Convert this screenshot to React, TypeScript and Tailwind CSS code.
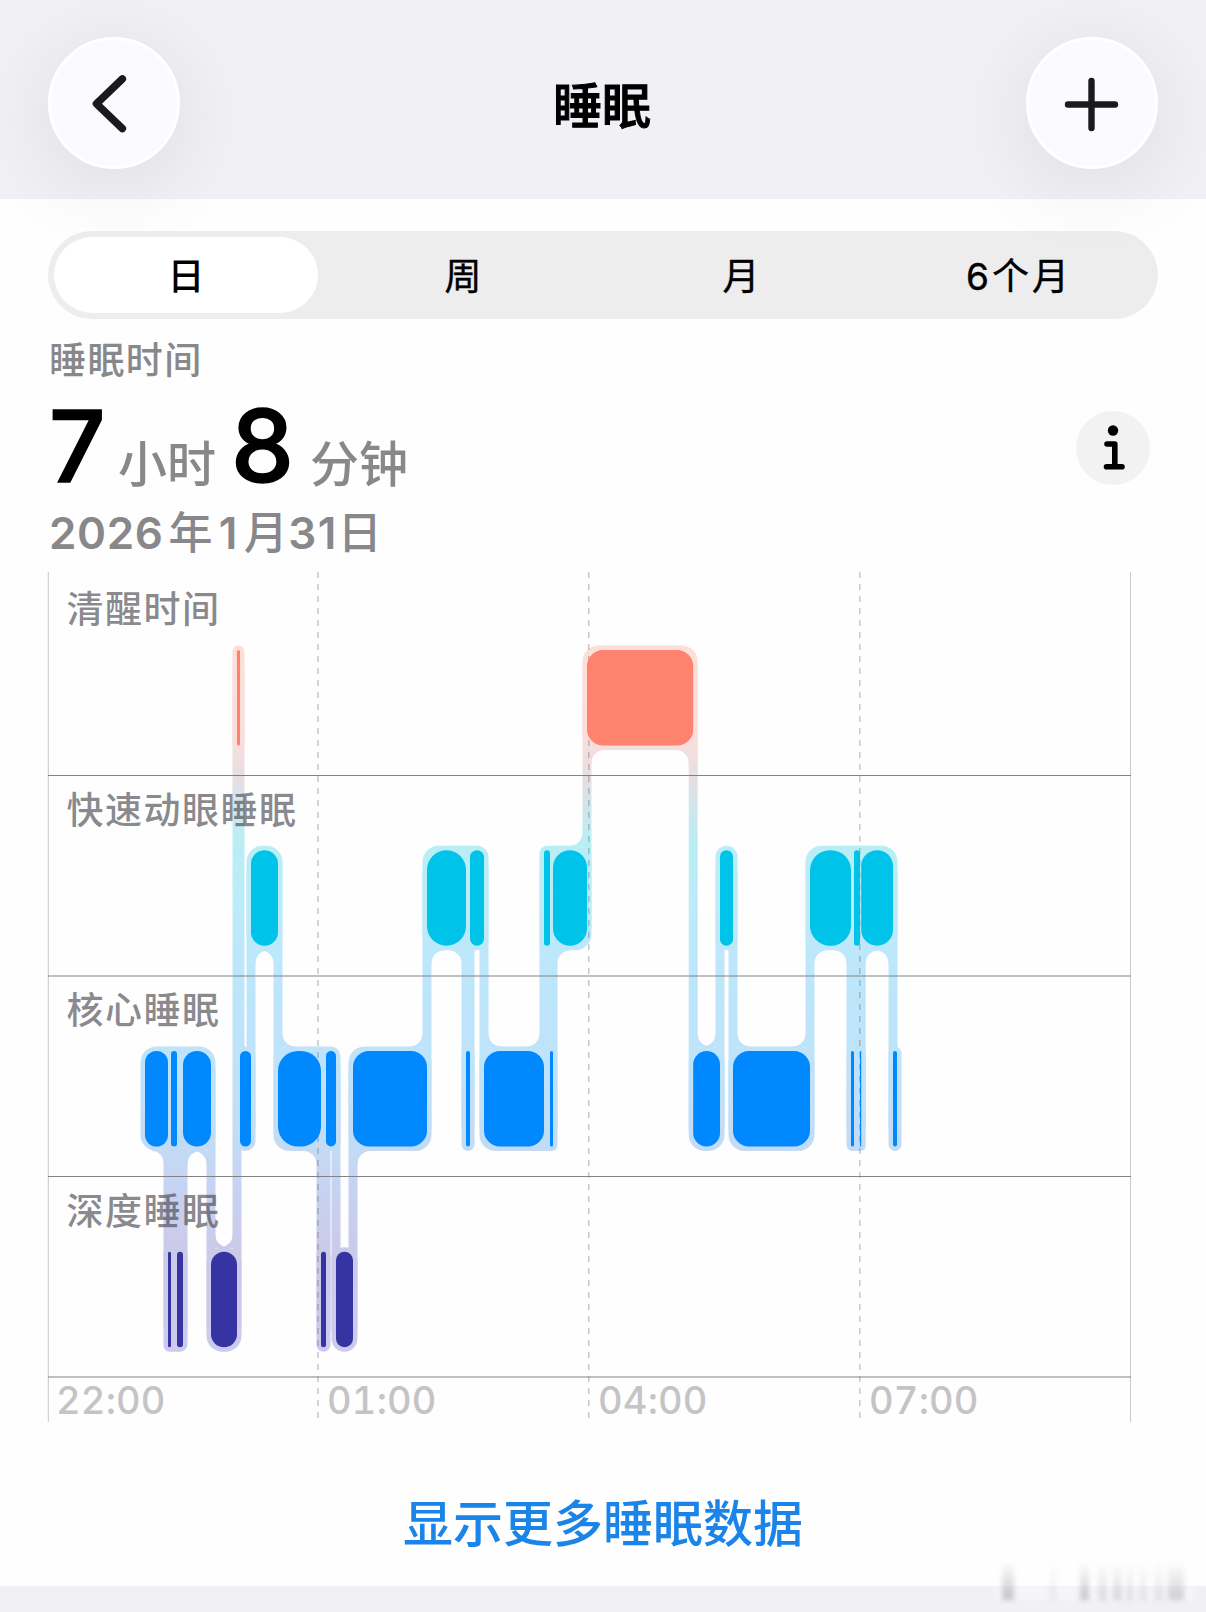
type Stage = 'awake' | 'rem' | 'core' | 'deep'

interface Segment {
    stage: Stage
    start: number
    end: number
}

const CJK = "font-['Inter','Noto_Sans_CJK_SC',sans-serif]"

const TABS = ['日', '周', '月', '6个月']
const STAGE_LABELS = ['清醒时间', '快速动眼睡眠', '核心睡眠', '深度睡眠']
const HOURS = ['22:00', '01:00', '04:00', '07:00']

// Chart geometry
const BAR_HEIGHT = 95.5
const HALO = 4.5
const STAGE_Y: Record<Stage, number> = { awake: 78, rem: 278.2, core: 479, deep: 679.7 }
const STAGE_COLOR: Record<Stage, string> = {
    awake: '#ff826e',
    rem: '#00c3ea',
    core: '#0088ff',
    deep: '#3634a3',
}
const ROW_LINES = [203.5, 404, 604.5, 805]
const HOUR_LINES = [270, 540.8, 811.8]

const TRANSITIONS: [Stage, number][] = [
    ['core', 97],
    ['deep', 120],
    ['core', 123],
    ['deep', 129],
    ['core', 135],
    ['deep', 163],
    ['awake', 189],
    ['core', 192],
    ['rem', 203],
    ['core', 230],
    ['deep', 273],
    ['core', 278],
    ['deep', 288],
    ['core', 305],
    ['rem', 379],
    ['core', 418],
    ['rem', 422],
    ['core', 436],
    ['rem', 496],
    ['core', 502],
    ['rem', 505],
    ['awake', 539],
    ['core', 645.2],
    ['rem', 672],
    ['core', 685],
    ['rem', 762],
    ['core', 803],
    ['rem', 806],
    ['core', 812],
    ['rem', 813.2],
    ['core', 845],
]
const SLEEP_END = 849

const segments: Segment[] = TRANSITIONS.map(([stage, start], i) => ({
    stage,
    start,
    end: i < TRANSITIONS.length - 1 ? TRANSITIONS[i + 1][1] : SLEEP_END,
}))

// Concave corner between a connector and the edge of a halo.
// side: 1 opens to the right, -1 to the left. dir: 1 goes down, -1 goes up.
const fillet = (x: number, y: number, r: number, side: number, dir: number) => {
    const sweep = side * dir > 0 ? 0 : 1
    return `M${x - side} ${y - dir} H${x + side * r} V${y} A${r} ${r} 0 0 ${sweep} ${x} ${y + dir * r} H${x - side} Z`
}

const getFillets = (seg: Segment, prev?: Segment, next?: Segment) => {
    const width = seg.end - seg.start
    const y = STAGE_Y[seg.stage]
    const prevDir = prev ? Math.sign(STAGE_Y[prev.stage] - y) : 0
    const nextDir = next ? Math.sign(STAGE_Y[next.stage] - y) : 0
    const gap = width - HALO * 2
    const radius = prevDir === nextDir ? (gap < 9 ? 0 : Math.min(13, gap * 0.72)) : width < 20 ? 0 : Math.min(13, width / 2)
    const edge = (dir: number) => (dir > 0 ? y + BAR_HEIGHT + HALO : y - HALO)
    const paths: string[] = []
    if (radius === 0) return paths
    if (prevDir) paths.push(fillet(seg.start + HALO, edge(prevDir), radius, 1, prevDir))
    if (nextDir) paths.push(fillet(seg.end - HALO, edge(nextDir), radius, -1, nextDir))
    return paths
}

// Two bars of one stage with only a short interruption share a single halo
const getBridge = (seg: Segment, after?: Segment) => {
    if (!after || after.stage !== seg.stage || after.start - seg.end > 8) return null
    const x1 = seg.end - Math.min(11, (seg.end - seg.start) / 2)
    const x2 = after.start + Math.min(11, (after.end - after.start) / 2)
    return <rect x={x1} y={STAGE_Y[seg.stage] - HALO} width={x2 - x1} height={BAR_HEIGHT + HALO * 2} />
}

const SleepChart = () => {
    return (
        <svg className="absolute inset-0 overflow-visible" width="1084" height="850" viewBox="0 0 1084 850" fill="none">
            <defs>
                <linearGradient id="halo" gradientUnits="userSpaceOnUse" x1="0" y1="73" x2="0" y2="780">
                    <stop offset="0" stopColor="#fddfd9" />
                    <stop offset="0.13" stopColor="#fbdedb" />
                    <stop offset="0.19" stopColor="#e4dfe3" />
                    <stop offset="0.28" stopColor="#b9eef5" />
                    <stop offset="0.36" stopColor="#bcecf9" />
                    <stop offset="0.44" stopColor="#bde7fa" />
                    <stop offset="0.58" stopColor="#bee3fb" />
                    <stop offset="0.71" stopColor="#c3dbf5" />
                    <stop offset="0.77" stopColor="#c6d2f2" />
                    <stop offset="0.85" stopColor="#cccae9" />
                    <stop offset="1" stopColor="#cecaee" />
                </linearGradient>
            </defs>

            {/* Halos and connectors */}
            <g fill="url(#halo)">
                {segments.map((seg, i) => {
                    const next = segments[i + 1]
                    const width = seg.end - seg.start
                    const y = STAGE_Y[seg.stage]
                    const top = next ? Math.min(y, STAGE_Y[next.stage]) : y
                    const bottom = next ? Math.max(y, STAGE_Y[next.stage]) : y
                    return (
                        <g key={seg.start}>
                            <rect
                                x={seg.start - HALO}
                                y={y - HALO}
                                width={width + HALO * 2}
                                height={BAR_HEIGHT + HALO * 2}
                                rx={Math.min(16, width / 2 + HALO)}
                            />
                            {next && (
                                <rect x={seg.end - HALO} y={top + 18} width={HALO * 2} height={bottom - top + 60} />
                            )}
                            {getBridge(seg, segments[i + 2])}
                            {getFillets(seg, segments[i - 1], next).map((d) => (
                                <path key={d} d={d} />
                            ))}
                        </g>
                    )
                })}
            </g>

            {/* Grid */}
            <path d="M0.3 0 V850 M1082.5 0 V850" stroke="#c9c9cb" />
            {HOUR_LINES.map((x) => (
                <path key={x} d={`M${x} 0 V850`} stroke="#3c3c43" strokeOpacity="0.3" strokeWidth="1.4" strokeDasharray="6 6" />
            ))}
            {ROW_LINES.map((y) => (
                <path key={y} d={`M0 ${y} H1083`} stroke="#828284" />
            ))}

            {/* Bars */}
            {segments.map((seg) => {
                const width = seg.end - seg.start
                return (
                    <rect
                        key={seg.start}
                        x={seg.start}
                        y={STAGE_Y[seg.stage]}
                        width={width}
                        height={BAR_HEIGHT}
                        rx={width > 50 ? 16 : Math.min(width / 2, 20)}
                        fill={STAGE_COLOR[seg.stage]}
                    />
                )
            })}
        </svg>
    )
}

const Header = () => {
    const circle =
        'flex size-[132px] items-center justify-center rounded-full border-[3px] border-white bg-[#fbfaff] shadow-[0_14px_90px_rgba(0,0,20,0.09)]'
    return (
        <header className="relative flex h-[199px] items-start justify-between px-12 pt-[37px]">
            <button className={circle}>
                <svg width="60" height="60" viewBox="0 0 60 60" fill="none" stroke="#1a1a1e" strokeWidth="7.6" strokeLinecap="round" strokeLinejoin="round">
                    <path d="M38.3 6 L12.5 30.7 L38.3 55.5" />
                </svg>
            </button>
            <h1 className="mt-[35px] -ml-[2px] text-[49px] leading-[70px] font-medium text-black [-webkit-text-stroke:1px_black]">睡眠</h1>
            <button className={circle}>
                <svg width="60" height="60" viewBox="0 0 60 60" fill="none" stroke="#1a1a1e" strokeWidth="6.4" strokeLinecap="round">
                    <path d="M29.5 8 V55 M6 31.5 H53" />
                </svg>
            </button>
        </header>
    )
}

const Tabs = () => {
    return (
        <div className="flex h-[88px] rounded-full bg-[#8e8e93]/15 p-[6px]">
            {TABS.map((tab, i) => (
                <button
                    key={tab}
                    className={`flex items-center justify-center rounded-full pt-[4px] text-[37px] text-black ${
                        i === 0 ? 'w-[264px] bg-white font-medium' : 'flex-1 pl-3 [-webkit-text-stroke:0.4px_black]'
                    } ${i === 3 ? 'tracking-[3px]' : ''}`}
                >
                    {tab}
                </button>
            ))}
        </div>
    )
}

const Summary = () => {
    return (
        <section className="flex items-start justify-between">
            <div className="pl-px text-[#88888b]">
                <p className="mt-[20px] text-[37px] leading-[44px] font-medium tracking-[1.4px]">睡眠时间</p>
                <p className="mt-[8px] flex h-[109px] items-baseline font-medium">
                    <span className="w-[69px] text-[99px] leading-[109px] text-black [-webkit-text-stroke:1.5px_black]">7</span>
                    <span className="w-[113px] text-[49px] leading-none">小时</span>
                    <span className="w-[79px] text-[100px] leading-[109px] text-black [-webkit-text-stroke:1.5px_black]">8</span>
                    <span className="text-[49px] leading-none">分钟</span>
                </p>
                <p className="mt-[6px] flex items-baseline text-[44px] leading-[54px] font-semibold tracking-[1.4px]">
                    <span className="tracking-[0.6px]">2026</span>
                    <span className="ml-[5px] font-medium">年</span>
                    <span className="ml-[5px]">1</span>
                    <span className="ml-[5px] font-medium">月</span>
                    <span className="-ml-[1px]">31</span>
                    <span className="font-medium">日</span>
                </p>
            </div>
            <button className="mt-[92px] mr-[8px] flex size-[74px] items-center justify-center rounded-full bg-[#f2f2f3]">
                <svg width="40" height="50" viewBox="0 0 40 50" fill="none" stroke="black" strokeWidth="5.6" strokeLinecap="round" strokeLinejoin="round">
                    <circle cx="20" cy="7.5" r="5.2" fill="black" stroke="none" />
                    <path d="M14 21 H21.8 V43.5 M13.5 43.8 H29" />
                </svg>
            </button>
        </section>
    )
}

// Vertical streaks left by the blurred caption in the corner
const STREAKS = [
    { left: 'ml-[8px]', look: 'w-[12px] opacity-65' },
    { left: 'ml-[36px]', look: 'w-[6px] opacity-20' },
    { left: 'ml-[24px]', look: 'w-[9px] opacity-60' },
    { left: 'ml-[9px]', look: 'w-[9px] opacity-35' },
    { left: 'ml-[6px]', look: 'w-[9px] opacity-40' },
    { left: 'ml-[5px]', look: 'w-[6px] opacity-35' },
    { left: 'ml-[6px]', look: 'w-[8px] opacity-25' },
    { left: 'ml-[7px]', look: 'w-[10px] opacity-25' },
    { left: 'ml-[4px]', look: 'w-[16px] opacity-50' },
]

const App = () => {
    return (
        <div
            className={`${CJK} relative h-[1612px] w-[1206px] overflow-hidden bg-[linear-gradient(#f1f0f5_199px,#fefefe_199px,#fefefe_1586px,#f0f0f5_1586px)]`}
        >
            <Header />
            <main className="relative h-[1387px] px-12 pt-8">
                <Tabs />
                <Summary />

                {/* Chart */}
                <section className="relative mt-[12px] h-[850px] w-[1084px]">
                    <SleepChart />
                    <div className="relative">
                        {STAGE_LABELS.map((label) => (
                            <p
                                key={label}
                                className="h-[200.5px] pt-[16px] pl-[18.5px] text-[37px] leading-[44px] font-medium tracking-[1.5px] text-[#3c3c43]/60"
                            >
                                {label}
                            </p>
                        ))}
                    </div>
                    <div className="relative grid grid-cols-4">
                        {HOURS.map((hour) => (
                            <span
                                key={hour}
                                className="pt-[2px] pl-[8px] text-[38px] leading-[48px] font-medium tracking-[0.2px] text-[#c4c4c6] tabular-nums"
                            >
                                {hour}
                            </span>
                        ))}
                    </div>
                </section>

                <button className="mx-auto mt-[67px] block text-[50px] leading-[70px] font-medium text-[#1a84e8]">
                    显示更多睡眠数据
                </button>
            </main>

            <div className="absolute top-[1562px] left-[994px] flex h-[38px] w-[202px] bg-gradient-to-b from-white/0 to-white/50 blur-[2.5px]">
                {STREAKS.map((streak, i) => (
                    <span key={i} className={`${streak.left} ${streak.look} h-full shrink-0 bg-gradient-to-b from-transparent to-[#a8a8ac]`} />
                ))}
            </div>
        </div>
    )
}

export default App
